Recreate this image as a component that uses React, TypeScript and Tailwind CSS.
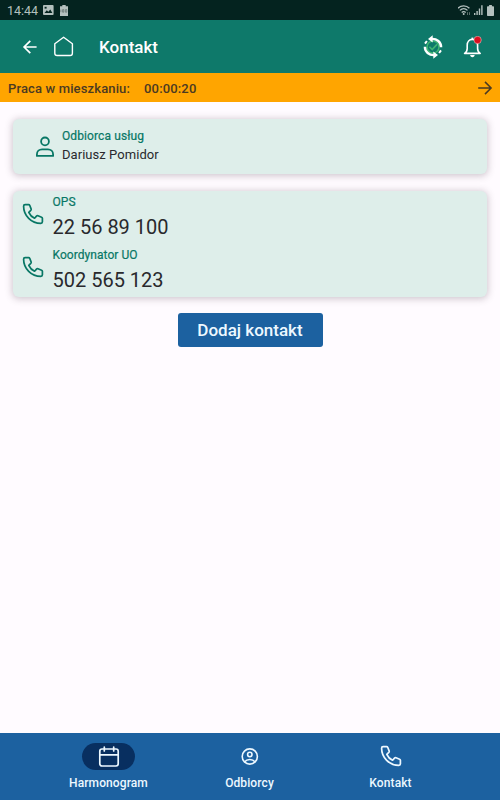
import type { ReactNode } from "react";
import clsx from "clsx";

interface IconProps {
  className?: string;
}

const PhoneIcon = ({ className }: IconProps) => (
  <svg
    viewBox="0 0 22 22"
    fill="none"
    stroke="currentColor"
    strokeWidth="1.7"
    strokeLinejoin="round"
    strokeLinecap="round"
    className={className}
  >
    <path d="M3.1 1.6H6.6C7.1 1.6 7.5 1.9 7.7 2.3L9.1 5.9C9.3 6.4 9.2 7 8.8 7.4L6.8 9.3C7.9 11.8 10 14 12.6 15.2L14.5 13.1C14.9 12.7 15.5 12.6 16 12.8L19.6 14.2C20.1 14.4 20.4 14.8 20.4 15.3V18.8C20.4 19.7 19.7 20.4 18.8 20.4C9.4 20.4 1.6 12.6 1.6 3.2C1.6 2.3 2.3 1.6 3.1 1.6Z" />
  </svg>
);

const UserIcon = ({ className }: IconProps) => (
  <svg viewBox="0 0 20 22" fill="none" stroke="currentColor" strokeWidth="1.8" className={className}>
    <circle cx="10" cy="5.4" r="3.9" />
    <path
      d="M1.9 19.9V18.4C1.9 15.5 4.2 13.3 7.1 13.3H12.9C15.8 13.3 18.1 15.5 18.1 18.4V19.9Z"
      strokeLinejoin="round"
    />
  </svg>
);

const BackIcon = ({ className }: IconProps) => (
  <svg
    viewBox="0 0 16 16"
    fill="none"
    stroke="currentColor"
    strokeWidth="1.7"
    className={className}
  >
    <path d="M14.6 8H2.4M8.3 1.8L2.1 8L8.3 14.2" />
  </svg>
);

const ArrowRightIcon = ({ className }: IconProps) => (
  <svg viewBox="0 0 16 16" fill="none" stroke="currentColor" strokeWidth="1.5" className={className}>
    <path d="M1.2 8H14M8 1.9L14.1 8L8 14.1" />
  </svg>
);

const HomeIcon = ({ className }: IconProps) => (
  <svg
    viewBox="0 0 22 22"
    fill="none"
    stroke="currentColor"
    strokeWidth="1.4"
    strokeLinejoin="round"
    className={className}
  >
    <path d="M10.6 1.3L19.4 7.8V17.2C19.4 18.7 18.6 19.5 17.1 19.5H4.1C2.6 19.5 1.8 18.7 1.8 17.2V7.8Z" />
  </svg>
);

const SyncIcon = ({ className }: IconProps) => (
  <svg viewBox="0 0 22 24" fill="none" className={className}>
    <circle cx="11" cy="12" r="6" stroke="#3fb573" strokeWidth="1.6" />
    <path d="M7.4 11.8L10.2 14.6L15 9.4" stroke="#3fb573" strokeWidth="1.6" />
    <path d="M9.5 3.9C14.8 3.5 19.2 7.2 19.1 12.2" stroke="#fff" strokeWidth="2.4" />
    <path d="M12.5 20.1C7.2 20.5 2.8 16.8 2.9 11.8" stroke="#fff" strokeWidth="2.4" />
    <path d="M10.7 .3V7.5L6 3.9Z" fill="#fff" />
    <path d="M11.3 23.7V16.5L16 20.1Z" fill="#fff" />
    <path d="M4.9 6L3 8.6M17.1 18L19 15.4" stroke="#fff" strokeWidth="2" />
  </svg>
);

const BellIcon = ({ className }: IconProps) => (
  <svg viewBox="0 0 20 22" fill="none" className={className}>
    <path
      d="M1.6 17.4C3.7 16.2 4.2 14.9 4.2 12.6V9.2C4.2 5.8 6.3 3.4 9.4 3.4C12.5 3.4 14.6 5.8 14.6 9.2V12.6C14.6 14.9 15.1 16.2 17.2 17.4Z"
      stroke="#fff"
      strokeWidth="1.6"
      strokeLinejoin="round"
    />
    <path d="M9.4 1.6V3.6" stroke="#fff" strokeWidth="1.8" />
    <path d="M7.2 19H11.6C11.6 20.3 10.7 21.2 9.4 21.2C8.1 21.2 7.2 20.3 7.2 19Z" fill="#fff" />
    <circle cx="14.6" cy="4" r="3.7" fill="#d81020" stroke="#f4dada" strokeWidth=".5" />
  </svg>
);

const CalendarIcon = ({ className }: IconProps) => (
  <svg
    viewBox="0 0 22 22"
    fill="none"
    stroke="currentColor"
    strokeWidth="1.7"
    strokeLinecap="round"
    className={className}
  >
    <rect x="1.8" y="3" width="18.4" height="17" rx="2.2" />
    <path d="M1.8 8.8H20.2M6.3 1V4.9M15.7 1V4.9" />
  </svg>
);

const ProfileIcon = ({ className }: IconProps) => (
  <svg viewBox="0 0 18 18" fill="none" stroke="currentColor" strokeWidth="1.6" className={className}>
    <circle cx="8.8" cy="8.5" r="7.6" />
    <circle cx="8.8" cy="6.5" r="2.2" />
    <path d="M3.7 13.7C4.8 12.3 6.6 11.5 8.8 11.5C11 11.5 12.8 12.3 13.9 13.7" />
  </svg>
);

const StatusBar = () => (
  <div className="flex h-5 items-center bg-[#04231f] pr-[6px] pl-[7px] text-[#b4c0be]">
    <span className="mt-px text-[12.5px] leading-5">14:44</span>
    <svg viewBox="0 0 11 10" className="ml-[5px] h-[10px] w-[11px]">
      <rect width="10.6" height="10" rx="1" fill="currentColor" />
      <path d="M1.5 8L3.8 5.3L5.3 6.8L7.3 4.5L9.4 8Z" fill="#04231f" />
      <rect x="1.6" y="1.8" width="2" height="1.8" fill="#04231f" />
    </svg>
    <svg viewBox="0 0 8 11" className="ml-[6px] h-[11px] w-2">
      <path d="M2.3 0H5.7V1.2H8V11H0V1.2H2.3Z" fill="currentColor" />
      <path d="M.9 4.6V7.2M2.6 4.6H3.8V7.2H2.6ZM5.4 4.6H6.8V7.2H5.4Z" stroke="#5d6b69" strokeWidth=".7" fill="none" />
    </svg>
    <svg viewBox="0 0 13 11" className="ml-auto h-[11px] w-[13px]" fill="none" stroke="currentColor" strokeWidth="1.3">
      <path d="M0 3.2C3.1 0 8.3 0 11.4 3.2M1.9 5.4C4.2 3.1 7.2 3.1 9.5 5.4M3.7 7.5C5 6.3 6.4 6.3 7.7 7.5" />
      <circle cx="5.7" cy="9" r="1" fill="currentColor" stroke="none" />
      <path d="M9.5 10V7.2M11.5 7.2V10" stroke="#5d706d" strokeWidth="1" />
    </svg>
    <svg viewBox="0 0 9 10" className="ml-[3px] h-[10px] w-[9px]" fill="currentColor">
      <path d="M0 8H1.4V10H0ZM2.4 6H3.8V10H2.4ZM4.8 3.6H6.2V10H4.8Z" />
      <path d="M7.2 .3H8.6V10H7.2Z" />
    </svg>
    <svg viewBox="0 0 7 11" className="ml-[4px] h-[11px] w-[7px]" fill="currentColor">
      <path d="M2.1 0H4.9V1.3H6.3Q7 1.3 7 2V10.3Q7 11 6.3 11H.7Q0 11 0 10.3V2Q0 1.3 .7 1.3H2.1Z" />
    </svg>
  </div>
);

const Header = () => (
  <header className="flex h-[53px] items-center bg-[#0e796a] text-white">
    <BackIcon className="ml-[22px] size-4" />
    <HomeIcon className="ml-[15px] size-[22px]" />
    <h1 className="ml-6 pt-[2px] text-[17px] font-medium">Kontakt</h1>
    <SyncIcon className="ml-auto h-6 w-[22px]" />
    <BellIcon className="mr-[17px] ml-[19px] h-[22px] w-5" />
  </header>
);

const WorkBar = () => (
  <div className="flex h-[29px] items-center bg-[#ffa500] pr-[7px] pl-2 text-[13px] font-medium text-[#4b3a22]">
    <span className="pt-[2px] tracking-[0.14px]">Praca w mieszkaniu:</span>
    <span className="ml-[14px] pt-[2px] tracking-[0.15px]">00:00:20</span>
    <ArrowRightIcon className="ml-auto size-4" />
  </div>
);

interface CardProps {
  className?: string;
  children: ReactNode;
}

const Card = ({ className, children }: CardProps) => (
  <section
    className={clsx(
      "mx-[13px] rounded-[6px] bg-[#deeeea] shadow-[0_1px_7px_1px_rgba(70,50,65,0.26)]",
      className
    )}
  >
    {children}
  </section>
);

interface PhoneRowProps {
  label: string;
  number: string;
}

const PhoneRow = ({ label, number }: PhoneRowProps) => (
  <div className="flex h-[53px] pl-[9px]">
    <PhoneIcon className="mt-[12px] size-[22px] text-[#087765]" />
    <div className="ml-[8.5px]">
      <p className="pt-[3px] text-[12px] leading-4 tracking-[0.06px] text-[#087765] [-webkit-text-stroke:0.2px_#087765]">
        {label}
      </p>
      <p className="mt-1 text-[20px] leading-[26px] text-[#29292d]">{number}</p>
    </div>
  </div>
);

interface NavItemProps {
  label: string;
  icon: ReactNode;
  active?: boolean;
}

const NavItem = ({ label, icon, active }: NavItemProps) => (
  <div className="flex w-[141px] flex-col items-center">
    <div
      className={clsx(
        "flex h-[27px] w-[53px] items-center justify-center rounded-full",
        active && "bg-[#082f60]"
      )}
    >
      {icon}
    </div>
    <span className="mt-[5px] text-[12px] leading-4 font-medium tracking-[0.1px]">{label}</span>
  </div>
);

const App = () => {
  return (
    <div className="flex h-screen flex-col bg-[#fffbff] font-['Roboto',sans-serif]">
      <StatusBar />
      <Header />
      <WorkBar />
      <main className="flex-1">
        <Card className="mt-[17px] flex h-[55px] pl-[22px]">
          <UserIcon className="mt-[17px] h-[22px] w-5 text-[#087765]" />
          <div className="ml-[7px] pt-[9px]">
            <p className="text-[12px] leading-4 tracking-[0.1px] text-[#087765] [-webkit-text-stroke:0.2px_#087765]">
              Odbiorca usług
            </p>
            <p className="mt-[3px] text-[13px] leading-4 tracking-[0.05px] text-[#29292d]">
              Dariusz Pomidor
            </p>
          </div>
        </Card>
        <Card className="mt-[17px] h-[106px]">
          <PhoneRow label="OPS" number="22 56 89 100" />
          <PhoneRow label="Koordynator UO" number="502 565 123" />
        </Card>
        <button className="mx-auto mt-[16px] block h-[34px] w-[145px] rounded-[3px] bg-[#1c61a0] pt-[2px] text-[17px] font-medium text-[#edf8ff]">
          Dodaj kontakt
        </button>
      </main>
      <nav className="flex h-[67px] justify-center bg-[#1c61a0] pt-[10px] pr-px text-[#edf8ff]">
        <NavItem label="Harmonogram" icon={<CalendarIcon className="size-[22px]" />} active />
        <NavItem label="Odbiorcy" icon={<ProfileIcon className="size-[18px]" />} />
        <NavItem label="Kontakt" icon={<PhoneIcon className="mb-[2px] size-[22px]" />} />
      </nav>
    </div>
  );
};

export default App;
